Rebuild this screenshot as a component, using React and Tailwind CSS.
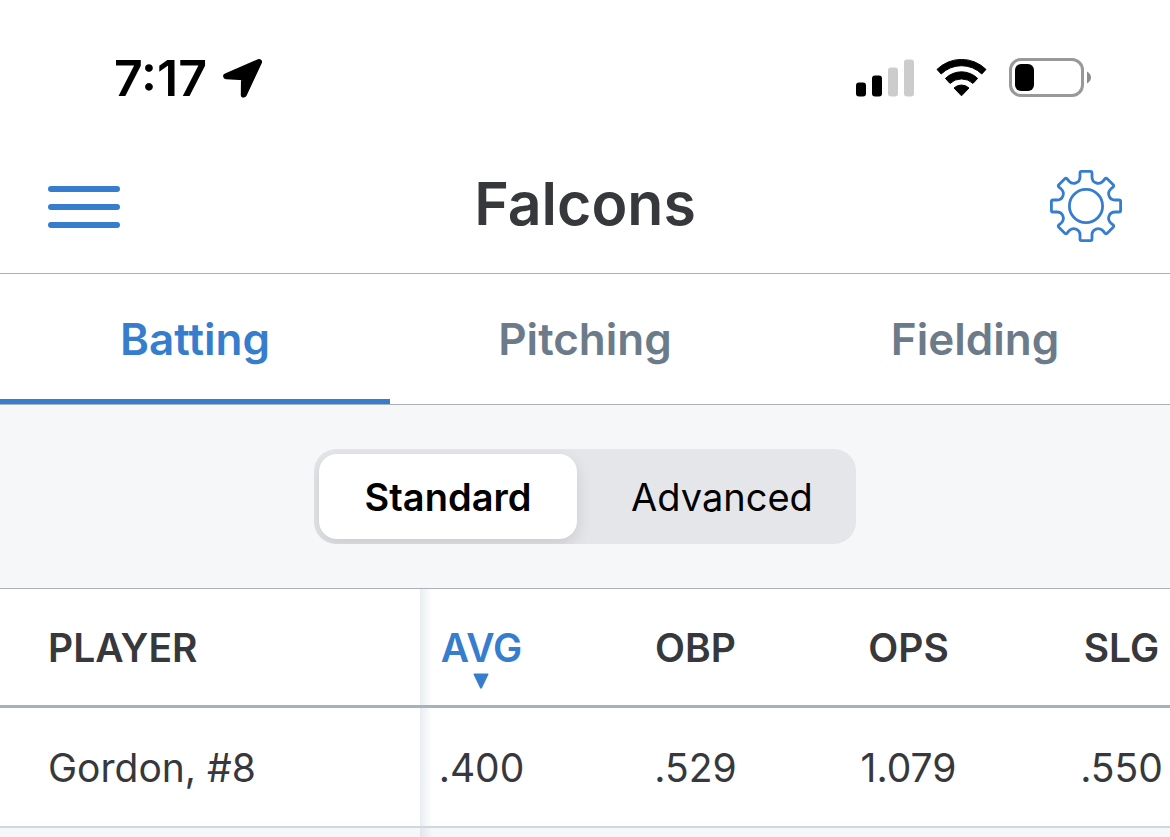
import React, { useState } from 'react';

const tabs = ['Batting', 'Pitching', 'Fielding'];
const views = ['Standard', 'Advanced'];
const columns = ['AVG', 'OBP', 'OPS', 'SLG'];

const players = [
    { name: 'Gordon, #8', stats: { AVG: '.400', OBP: '.529', OPS: '1.079', SLG: '.550' } },
];

const LocationIcon = () => (
    <svg className="w-10 h-10" viewBox="0 0 40 40" fill="currentColor" stroke="currentColor" strokeWidth="6" strokeLinejoin="round" aria-hidden="true">
        <path d="M36 4L3.2 18.2L21 19.2L20.8 36.6Z" />
    </svg>
);

const SignalIcon = () => (
    <svg className="w-[58px] h-[38px]" viewBox="0 0 58 38" aria-label="Signal">
        <rect x="0" y="23.5" width="10" height="14" rx="3" fill="#000" />
        <rect x="16" y="16.5" width="10" height="21" rx="3" fill="#000" />
        <rect x="32" y="8.5" width="10" height="29" rx="3" fill="#ccc" />
        <rect x="48" y="0.5" width="10" height="37" rx="3" fill="#ccc" />
    </svg>
);

const WifiIcon = () => (
    <svg className="w-[51px] h-[38px]" viewBox="0 0 51 38" fill="#000" stroke="#000" strokeWidth="1" strokeLinejoin="round" aria-label="Wi-Fi">
        <path d="M1 10.4A35 35 0 0 1 50 10.4L45.8 15A29 29 0 0 0 5.2 15Z" />
        <path d="M9.4 19.4A23 23 0 0 1 41.6 19.4L37 24.4A17 17 0 0 0 14 24.4Z" />
        <path d="M18 29A11 11 0 0 1 33 29L25.5 36.8Z" />
    </svg>
);

const BatteryIcon = () => (
    <svg className="w-[82px] h-[40px]" viewBox="0 0 82 40" aria-label="Battery">
        <rect x="1.5" y="1.5" width="72" height="36" rx="10.5" fill="none" stroke="#999" strokeWidth="3" />
        <rect x="6" y="6" width="19" height="27" rx="6" fill="#000" />
        <path d="M78 13.5Q82 16 82 19.5Q82 23 78 25.5Z" fill="#8c8c8c" />
    </svg>
);

const MenuIcon = () => (
    <svg className="w-[72px] h-[72px]" viewBox="0 0 72 72" fill="currentColor" aria-hidden="true">
        <rect y="16" width="72" height="6" rx="3" />
        <rect y="34" width="72" height="6" rx="3" />
        <rect y="52" width="72" height="6" rx="3" />
    </svg>
);

const GearIcon = () => (
    <svg className="w-[72px] h-[72px]" viewBox="0 0 72 72" fill="none" stroke="currentColor" strokeWidth="2.8" aria-hidden="true">
        <circle cx="36" cy="36" r="16.6" />
        {[0, 90, 180, 270].map((angle) => (
            <path
                key={angle}
                transform={`rotate(${angle} 36 36)`}
                d="M36 1.4H40.5Q42 1.4 42 3V7C42 13 49 15.4 53 11.2L54.8 9Q56 7.7 57.2 8.8L63.2 14.8Q64.3 16 63 17.2L60.8 19C56.6 23 59 30 65 30H69Q70.6 30 70.6 31.5V36"
            />
        ))}
    </svg>
);

const StatusBar = () => (
    <div className="flex items-center justify-between h-[139px] pt-4 pl-[114px] pr-[79px] text-black">
        <div className="flex items-center gap-4">
            <span className="text-[50px] leading-none font-semibold">7:17</span>
            <LocationIcon />
        </div>
        <div className="flex items-center gap-[22px]">
            <SignalIcon />
            <WifiIcon />
            <BatteryIcon />
        </div>
    </div>
);

const StatsTable = ({ sortBy, onSort }) => (
    <div className="overflow-x-auto [scrollbar-width:none]">
        <table className="table-fixed w-full min-w-[1228px] border-separate border-spacing-0 text-[39px] leading-none">
            <colgroup>
                <col className="w-[420px]" />
                <col className="w-[169px]" />
                <col />
                <col />
                <col />
            </colgroup>
            <thead>
                <tr className="h-[119px]">
                    <th scope="col" className="sticky left-0 z-10 bg-white border-b-3 border-[#a9b1b8] pl-12 text-left font-semibold after:absolute after:left-full after:inset-y-0 after:w-3 after:bg-linear-to-r after:from-[#8fa3b8]/20 after:to-transparent">
                        PLAYER
                    </th>
                    {columns.map((col) => (
                        <th key={col} scope="col" className="border-b-3 border-[#a9b1b8] p-0 font-semibold nth-2:pr-[46px]">
                            <button
                                onClick={() => onSort(col)}
                                className={`relative cursor-pointer ${sortBy === col ? 'text-[#367dce]' : ''}`}
                            >
                                {col}
                                {sortBy === col && (
                                    <svg className="absolute top-full left-1/2 -translate-x-1/2 mt-1.5 w-4 h-4" viewBox="0 0 16 16" fill="currentColor" aria-hidden="true">
                                        <path d="M1.5 0.5H14.5Q16 0.5 15.2 2L9 15Q8 16.6 7 15L0.8 2Q0 0.5 1.5 0.5Z" />
                                    </svg>
                                )}
                            </button>
                        </th>
                    ))}
                </tr>
            </thead>
            <tbody>
                {players.map((player) => (
                    <tr key={player.name} className="h-[120px]">
                        <th scope="row" className="sticky left-0 z-10 bg-white border-b-2 border-[#d3d7db] pl-12 text-left font-normal after:absolute after:left-full after:inset-y-0 after:w-3 after:bg-linear-to-r after:from-[#8fa3b8]/20 after:to-transparent">
                            {player.name}
                        </th>
                        {columns.map((col) => (
                            <td key={col} className="border-b-2 border-[#d3d7db] p-0 text-center nth-2:pr-[46px]">
                                {player.stats[col]}
                            </td>
                        ))}
                    </tr>
                ))}
            </tbody>
        </table>
    </div>
);

const App = () => {
    const [activeTab, setActiveTab] = useState('Batting');
    const [view, setView] = useState('Standard');
    const [sortBy, setSortBy] = useState('AVG');

    return (
        <div className="min-h-screen flex flex-col bg-[#f5f7f9] font-[Inter,sans-serif] text-[#37383c]">
            <header className="bg-white border-b border-[#aab0b3]">
                <StatusBar />
                <div className="flex items-center justify-between h-[134px] px-12">
                    <button aria-label="Menu" className="text-[#367dce] cursor-pointer">
                        <MenuIcon />
                    </button>
                    <h1 className="pb-1.5 text-[59px] leading-none font-semibold">Falcons</h1>
                    <button aria-label="Settings" className="text-[#367dce] cursor-pointer">
                        <GearIcon />
                    </button>
                </div>
            </header>

            <nav className="grid grid-cols-3 bg-white border-b border-[#aab2b8]">
                {tabs.map((tab) => (
                    <button
                        key={tab}
                        onClick={() => setActiveTab(tab)}
                        className={`h-[130px] pt-[5px] border-b-5 text-[44px] leading-none font-semibold cursor-pointer ${activeTab === tab
                                ? 'border-[#367dce] text-[#367dce]'
                                : 'border-transparent text-[#6b7b89]'
                            }`}
                    >
                        {tab}
                    </button>
                ))}
            </nav>

            <div className="flex justify-center py-11 border-b border-[#aab2b8]">
                <div className="flex justify-between w-[542px] h-[95px] p-[5px] rounded-[22px] bg-[#e5e6ea] overflow-hidden">
                    {views.map((item) => (
                        <button
                            key={item}
                            onClick={() => setView(item)}
                            className={`w-[258px] rounded-[18px] text-[38px] leading-none text-black cursor-pointer ${view === item
                                    ? 'bg-white font-semibold shadow-[0_6px_16px_rgba(0,0,0,0.12)]'
                                    : 'font-normal'
                                }`}
                        >
                            {item}
                        </button>
                    ))}
                </div>
            </div>

            <main className="bg-white">
                <StatsTable sortBy={sortBy} onSort={setSortBy} />
            </main>
            <div className="flex grow">
                <div className="w-[420px]" />
                <div className="w-3 bg-linear-to-r from-[#8fa3b8]/20 to-transparent" />
            </div>
        </div>
    );
};

export default App;
